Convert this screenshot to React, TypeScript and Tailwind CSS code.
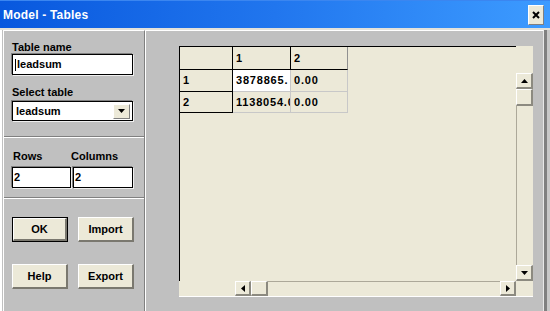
import React from "react";

const font = { fontFamily: '"Liberation Sans", Arial, sans-serif' };

// raised beige button used by the scrollbars
const ScrollBtn = ({ dir }: { dir: "up" | "down" | "left" | "right" }) => {
  const pts: Record<string, string> = {
    up: "0,4 7,4 3.5,0",
    down: "0,0 7,0 3.5,4",
    left: "4,0 4,7 0,3.5",
    right: "0,0 0,7 4,3.5",
  };
  const vertical = dir === "up" || dir === "down";
  return (
    <div className="w-full h-full flex items-center justify-center bg-[#ece9d8] border-t border-l border-t-white border-l-white border-b-2 border-r-2 border-b-[#8c8a80] border-r-[#8c8a80]">
      <svg width={vertical ? 7 : 4} height={vertical ? 4 : 7} viewBox={vertical ? "0 0 7 4" : "0 0 4 7"}>
        <polygon points={pts[dir]} fill="#000" />
      </svg>
    </div>
  );
};

const Thumb = () => (
  <div className="w-full h-full bg-[#ece9d8] border-t border-l border-t-white border-l-white border-b-2 border-r-2 border-b-[#8c8a80] border-r-[#8c8a80]" />
);

const WinButton = ({ label, isDefault }: { label: string; isDefault?: boolean }) => (
  <div className={`w-[56px] h-[25px] ${isDefault ? "border border-black" : ""}`}>
    <div className="w-full h-full flex items-center justify-center bg-[#ece9d8] border-t border-l border-t-white border-l-white border-b-2 border-r-2 border-b-[#7a786f] border-r-[#7a786f] text-[11px] font-bold text-black">
      {label}
    </div>
  </div>
);

const sunken = "bg-white border border-black shadow-[-1px_-1px_0_#808080,1px_1px_0_#f0f0f0]";

export default function App() {
  return (
    <div className="w-[550px] h-[311px] bg-[#c0c0c0] flex flex-col overflow-hidden" style={font}>
      {/* title bar */}
      <div className="h-[28px] flex items-center justify-between pl-[3px] pr-[6px] bg-gradient-to-r from-[#0858de] via-[#2176ee] to-[#3d9bff] border-t border-t-[#3b86f0]">
        <span className="text-white font-bold text-[12px] tracking-[0.2px]">Model - Tables</span>
        <div className="w-[16px] h-[20px] mt-[1px] flex items-center justify-center bg-[#ece9d8] border-t border-l border-t-white border-l-white border-b border-r border-b-[#808080] border-r-[#808080]">
          <svg width="8" height="8" viewBox="0 0 8 8">
            <path d="M1 1 L7 7 M7 1 L1 7" stroke="#000" strokeWidth="2" />
          </svg>
        </div>
      </div>
      <div className="h-[2px] bg-[#e4e2da]" />

      {/* body */}
      <div className="flex-1 flex border-l-2 border-l-white pl-[1px]">
        {/* left panel */}
        <div className="w-[142px] flex flex-col border-l border-l-white border-r border-r-[#808080] border-t border-t-white">
          <div className="h-[106px] pt-[10px] pl-[8px] border-b border-b-[#808080] text-black text-[11px] font-bold">
            <div className="h-[13px] leading-[13px]">Table name</div>
            <div className={`w-[121px] h-[21px] flex items-center pl-[2px] ${sunken}`}>
              <span className="w-[1px] h-[12px] bg-black mr-[1px]" />
              <span>leadsum</span>
            </div>
            <div className="h-[13px] leading-[13px] mt-[11px]">Select table</div>
            <div className={`w-[121px] h-[20px] mt-[2px] flex items-center justify-between pl-[3px] pr-[2px] ${sunken}`}>
              <span>leadsum</span>
              <div className="w-[17px] h-[15px] flex items-center justify-center bg-[#ece9d8] border-t border-l border-t-white border-l-white border-b border-r border-b-[#808080] border-r-[#808080]">
                <svg width="7" height="4" viewBox="0 0 7 4">
                  <polygon points="0,0 7,0 3.5,4" fill="#000" />
                </svg>
              </div>
            </div>
          </div>

          <div className="h-[61px] pt-[12px] pl-[8px] border-t border-t-white border-b border-b-[#808080] text-black text-[11px] font-bold">
            <div className="flex h-[13px] leading-[13px]">
              <span className="w-[59px] pl-[1px]">Rows</span>
              <span>Columns</span>
            </div>
            <div className="flex gap-[2px] mt-[4px]">
              <div className={`w-[59px] h-[21px] flex items-center pl-[1px] ${sunken}`}>2</div>
              <div className={`w-[60px] h-[21px] flex items-center pl-[1px] ${sunken}`}>2</div>
            </div>
          </div>

          <div className="flex-1 pt-[18px] pl-[8px] border-t border-t-white flex flex-col gap-[22px]">
            <div className="flex gap-[10px]">
              <WinButton label="OK" isDefault />
              <WinButton label="Import" />
            </div>
            <div className="flex gap-[10px]">
              <WinButton label="Help" />
              <WinButton label="Export" />
            </div>
          </div>
        </div>

        {/* right panel */}
        <div className="w-[399px] border-l border-l-white border-t border-t-white border-r border-r-[#e8e8e8] pt-[15px] pl-[33px]">
          <div className="w-[354px] h-[251px] flex flex-col">
            <div className="flex h-[235px]">
              <div className="w-[337px] border-t border-l border-black bg-[#ece9d8] text-[11px] font-bold text-black tracking-[0.8px]">
                <div className="grid grid-cols-[53px_58px_57px] w-[168px]">
                  <div className="h-[23px] border-r border-b border-black" />
                  <div className="h-[23px] border-r border-b border-black flex items-center pl-[3px]">1</div>
                  <div className="h-[23px] border-r border-b border-[#909090] border-b-black flex items-center pl-[3px]">2</div>

                  <div className="h-[22px] border-r border-b border-black flex items-center pl-[3px]">1</div>
                  <div className="h-[22px] border-r border-b border-[#c8c8c8] bg-white flex items-center pl-[3px] overflow-hidden whitespace-nowrap">3878865.</div>
                  <div className="h-[22px] border-r border-b border-[#c8c8c8] flex items-center pl-[3px]">0.00</div>

                  <div className="h-[21px] border-r border-b border-black flex items-center pl-[3px]">2</div>
                  <div className="h-[21px] border-r border-b border-[#c8c8c8] flex items-center pl-[3px] overflow-hidden whitespace-nowrap">1138054.0</div>
                  <div className="h-[21px] border-r border-b border-[#c8c8c8] flex items-center pl-[3px]">0.00</div>
                </div>
              </div>
              <div className="w-[17px] flex flex-col bg-[#ece9d8]">
                <div className="h-[27px]" />
                <div className="h-[16px]"><ScrollBtn dir="up" /></div>
                <div className="h-[17px]"><Thumb /></div>
                <div className="flex-1 border-l border-l-[#aca899]" />
                <div className="h-[16px]"><ScrollBtn dir="down" /></div>
              </div>
            </div>
            <div className="flex h-[16px] bg-[#ece9d8] border-b border-b-white">
              <div className="w-[56px]" />
              <div className="w-[16px]"><ScrollBtn dir="left" /></div>
              <div className="w-[17px]"><Thumb /></div>
              <div className="flex-1 border-t border-t-[#aca899]" />
              <div className="w-[16px]"><ScrollBtn dir="right" /></div>
              <div className="w-[17px]" />
            </div>
          </div>
        </div>
        <div className="w-[3px] bg-[#808080]" />
        <div className="flex-1 bg-[#c8c8c8]" />
      </div>
    </div>
  );
}
